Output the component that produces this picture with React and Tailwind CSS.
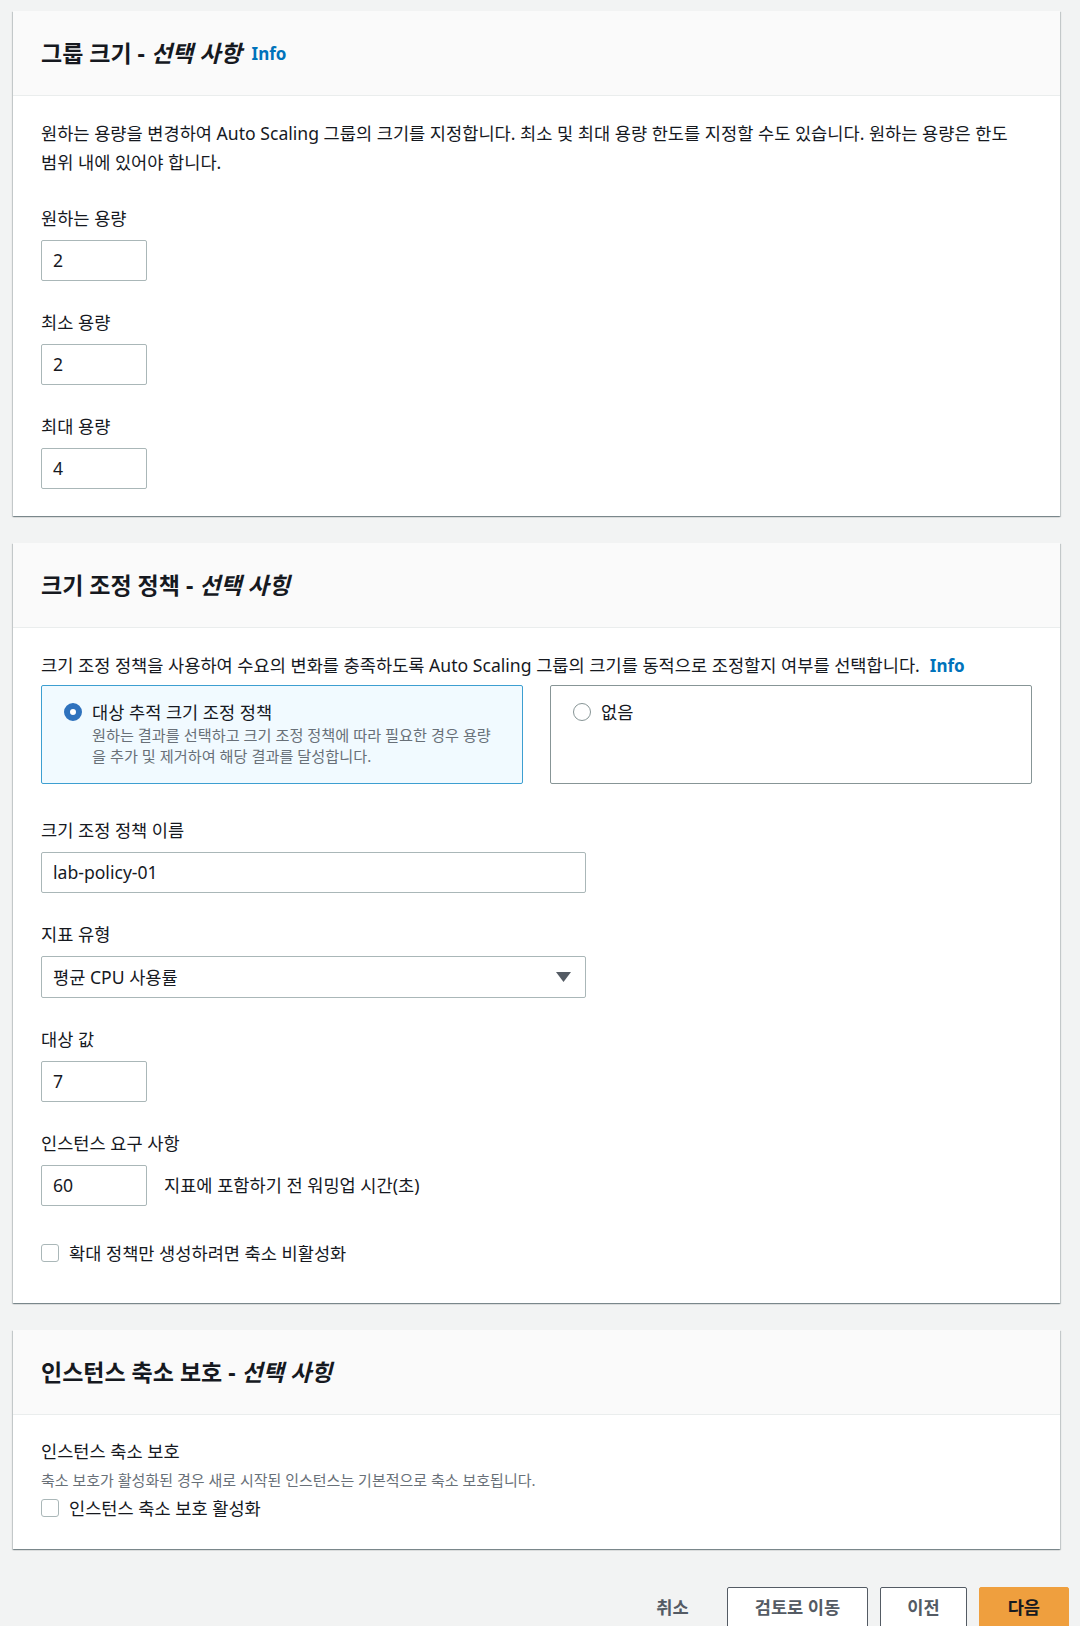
import React from 'react';

const card =
  'mr-[9px] bg-white shadow-[0_1px_1px_0_rgba(0,28,36,0.3),1px_1px_1px_0_rgba(0,28,36,0.15),-1px_1px_1px_0_rgba(0,28,36,0.15)]';

function Header({ title, optional, info }) {
  return (
    <div className="h-[85px] px-[28px] flex items-center bg-[#fafafa] border-b border-[#eaeded]">
      <h2 className="text-[23px] leading-[30px] font-bold text-[#16191f]">
        {title} - <i>{optional}</i>
      </h2>
      {info && <span className="ml-[10px] mt-[2px] text-[17px] font-bold text-[#0073bb]">Info</span>}
    </div>
  );
}

function Field({ label, value, wide, children }) {
  return (
    <div>
      <div className="text-[17.6px] leading-[24px] text-[#16191f]">{label}</div>
      <div className="mt-[10px] flex items-center">
        <div
          className={`h-[41px] ${wide ? 'w-[545px]' : 'w-[106px]'} border border-[#aab7b8] rounded-[2px] pl-[11px] flex items-center text-[17.6px] text-[#16191f]`}
        >
          {value}
        </div>
        {children}
      </div>
    </div>
  );
}

function Checkbox({ label }) {
  return (
    <label className="flex items-center gap-[10px] text-[17.6px] leading-[24px] text-[#16191f]">
      <span className="w-[18px] h-[18px] border border-[#aab7b8] rounded-[3px] bg-white shrink-0" />
      {label}
    </label>
  );
}

export default function App() {
  return (
    <div className="min-h-[1626px] bg-[#f2f3f3] pl-[13px] pr-[11px] pt-[11px] font-['Noto_Sans','Noto_Sans_CJK_KR',sans-serif] text-[#16191f]">
      {/* 그룹 크기 */}
      <div className={card}>
        <Header title="그룹 크기" optional="선택 사항" info />
        <div className="px-[28px] pt-[23px] pb-[27px]">
          <p className="text-[17.6px] leading-[29px] whitespace-nowrap">
            원하는 용량을 변경하여 Auto Scaling 그룹의 크기를 지정합니다. 최소 및 최대 용량 한도를 지정할 수도 있습니다. 원하는 용량은 한도
            <br />
            범위 내에 있어야 합니다.
          </p>
          <div className="mt-[29px] flex flex-col gap-[29px]">
            <Field label="원하는 용량" value="2" />
            <Field label="최소 용량" value="2" />
            <Field label="최대 용량" value="4" />
          </div>
        </div>
      </div>

      {/* 크기 조정 정책 */}
      <div className={`${card} mt-[27px]`}>
        <Header title="크기 조정 정책" optional="선택 사힝" />
        <div className="px-[28px] pt-[23px] pb-[38px]">
          <p className="text-[17.6px] leading-[29px] whitespace-nowrap">
            크기 조정 정책을 사용하여 수요의 변화를 충족하도록 Auto Scaling 그룹의 크기를 동적으로 조정할지 여부를 선택합니다.
            <span className="ml-[10px] text-[17px] font-bold text-[#0073bb]">Info</span>
          </p>
          <div className="mt-[5px] grid grid-cols-2 gap-[27px]">
            <div className="h-[99px] border border-[#3d9fd1] bg-[#f1faff] rounded-[2px] pl-[22px] pr-[16px] pt-[14px] flex gap-[10px]">
              <span className="mt-[3px] w-[18px] h-[18px] rounded-full border-[6px] border-[#2f72bd] bg-white shrink-0" />
              <div>
                <div className="text-[17.6px] leading-[24px]">대상 추적 크기 조정 정책</div>
                <div className="mt-[1px] text-[15.2px] leading-[21px] text-[#687078] whitespace-nowrap">
                  원하는 결과를 선택하고 크기 조정 정책에 따라 필요한 경우 용량
                  <br />
                  을 추가 및 제거하여 해당 결과를 달성합니다.
                </div>
              </div>
            </div>
            <div className="h-[99px] border border-[#879596] rounded-[2px] pl-[22px] pt-[14px] flex gap-[10px]">
              <span className="mt-[3px] w-[18px] h-[18px] rounded-full border-[1.5px] border-[#879596] bg-white shrink-0" />
              <div className="text-[17.6px] leading-[24px]">없음</div>
            </div>
          </div>

          <div className="mt-[34px] flex flex-col gap-[29px]">
            <Field label="크기 조정 정책 이름" value="lab-policy-01" wide />
            <div>
              <div className="text-[17.6px] leading-[24px]">지표 유형</div>
              <div className="mt-[10px] h-[42px] w-[545px] border border-[#aab7b8] rounded-[2px] pl-[11px] pr-[14px] flex items-center justify-between text-[17.6px]">
                <span>평균 CPU 사용률</span>
                <svg width="15" height="10" viewBox="0 0 15 10">
                  <path d="M0 0 H15 L7.5 10 Z" fill="#545b64" />
                </svg>
              </div>
            </div>
            <Field label="대상 값" value="7" />
            <Field label="인스턴스 요구 사항" value="60">
              <span className="ml-[17px] text-[17.6px]">지표에 포함하기 전 워밍업 시간(초)</span>
            </Field>
          </div>

          <div className="mt-[35px]">
            <Checkbox label="확대 정책만 생성하려면 축소 비활성화" />
          </div>
        </div>
      </div>

      {/* 인스턴스 축소 보호 */}
      <div className={`${card} mt-[27px]`}>
        <Header title="인스턴스 축소 보호" optional="선택 사힝" />
        <div className="px-[28px] pt-[24px] pb-[29px]">
          <div className="text-[17.6px] leading-[24px]">인스턴스 축소 보호</div>
          <div className="mt-[6px] text-[15px] leading-[22px] text-[#687078]">
            축소 보호가 활성화된 경우 새로 시작된 인스턴스는 기본적으로 축소 보호됩니다.
          </div>
          <div className="mt-[5px]">
            <Checkbox label="인스턴스 축소 보호 활성화" />
          </div>
        </div>
      </div>

      {/* Actions */}
      <div className="mt-[38px] flex justify-end gap-[12px]">
        <button className="h-[41px] px-[26px] text-[17.6px] font-bold text-[#545b64]">취소</button>
        <button className="h-[41px] px-[27px] border border-[#545b64] rounded-[2px] bg-white text-[17.6px] font-bold text-[#545b64]">
          검토로 이동
        </button>
        <button className="h-[41px] px-[26px] border border-[#545b64] rounded-[2px] bg-white text-[17.6px] font-bold text-[#545b64]">
          이전
        </button>
        <button className="h-[41px] px-[28px] border border-[#ef9f3e] rounded-[2px] bg-[#ef9f3e] text-[17.6px] font-bold text-[#16191f]">
          다음
        </button>
      </div>
    </div>
  );
}
